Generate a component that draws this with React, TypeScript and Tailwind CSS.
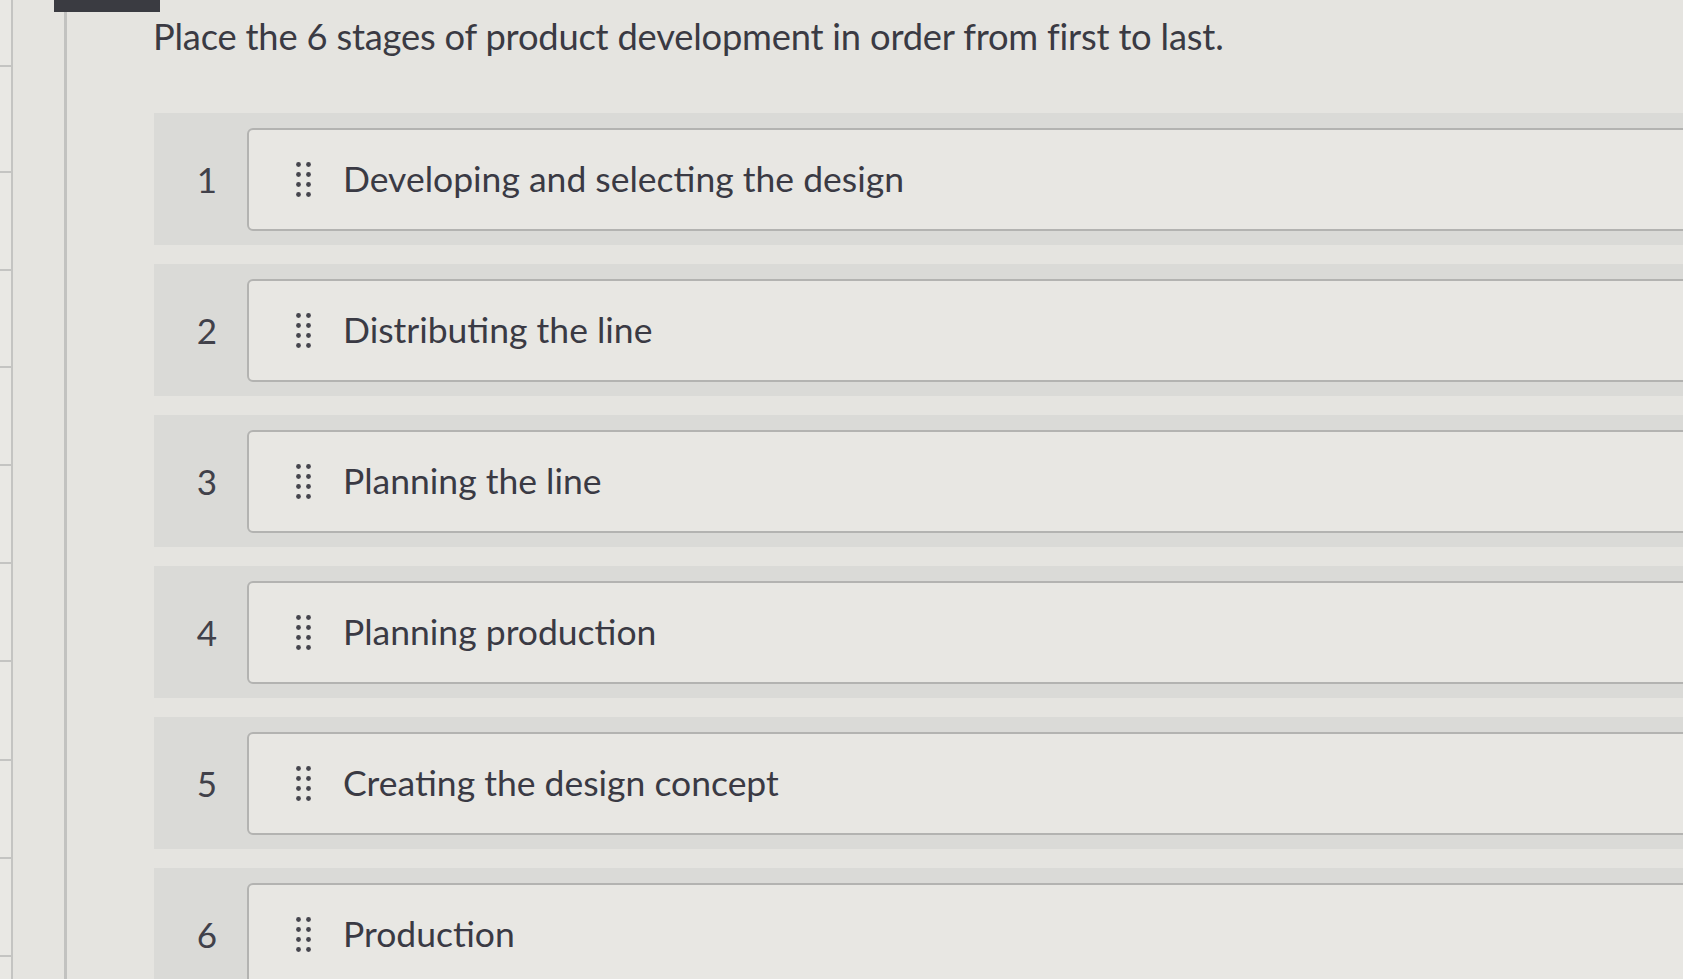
const stages = [
  "Developing and selecting the design",
  "Distributing the line",
  "Planning the line",
  "Planning production",
  "Creating the design concept",
  "Production",
];

const ticks = [67, 175, 275, 374, 474, 574, 674, 775, 875, 975];

const DragHandle = () => (
  <svg width="17" height="37" viewBox="0 0 17 37" className="shrink-0 text-[#45454d]">
    {[3.5, 13.5, 23.5, 33.5].map((y) =>
      [3.5, 13.5].map((x) => <circle key={`${x}-${y}`} cx={x} cy={y} r="2.4" fill="currentColor" />)
    )}
  </svg>
);

const App = () => {
  return (
    <div
      className="relative w-[1683px] h-[979px] overflow-hidden bg-[#e5e4e0] flex text-[#3e3e47]"
      style={{fontFamily: "Lato, 'Open Sans', sans-serif"}}
    >
      {/* left gutter with ruler ticks */}
      <div className="w-[13px] shrink-0 flex flex-col bg-[#e9e8e4] border-r-2 border-[#c4c4c2]">
        {ticks.map((t, i) => (
          <div
            key={t}
            className="border-b-2 border-[#c4c4c2] shrink-0"
            style={{height: i === 0 ? t : t - ticks[i - 1] - 2}}
          />
        ))}
      </div>
      <div className="w-[54px] shrink-0 border-r-[3px] border-[#c2c2c0]" />

      {/* dark tab top left */}
      <div className="absolute top-0 left-[54px] w-[106px] h-[12px] bg-[#3a3b41]" />

      <main className="flex-1 flex flex-col pl-[86px] pt-[14px]">
        <h1 className="text-[36.3px] leading-[44px] tracking-[-0.2px] text-[#3a3a43]">
          Place the 6 stages of product development in order from first to last.
        </h1>

        <div className="mt-[55px] flex flex-col gap-[19px] ml-[1px]">
          {stages.map((s, i) => (
            <div key={s} className="h-[132px] shrink-0 flex items-center bg-[#dadad7]">
              <span className="w-[93px] pl-[13px] text-center text-[35px] text-[#41414a]">{i + 1}</span>
              <div className="flex-1 -mr-[10px] h-[103px] flex items-center pl-[46px] gap-[31px] bg-[#e8e7e3] border-2 border-[#b3b3b1] rounded-md">
                <DragHandle />
                <span className="text-[35.5px] text-[#3a3a44]">{s}</span>
              </div>
            </div>
          ))}
        </div>
      </main>
    </div>
  );
};

export default App;
